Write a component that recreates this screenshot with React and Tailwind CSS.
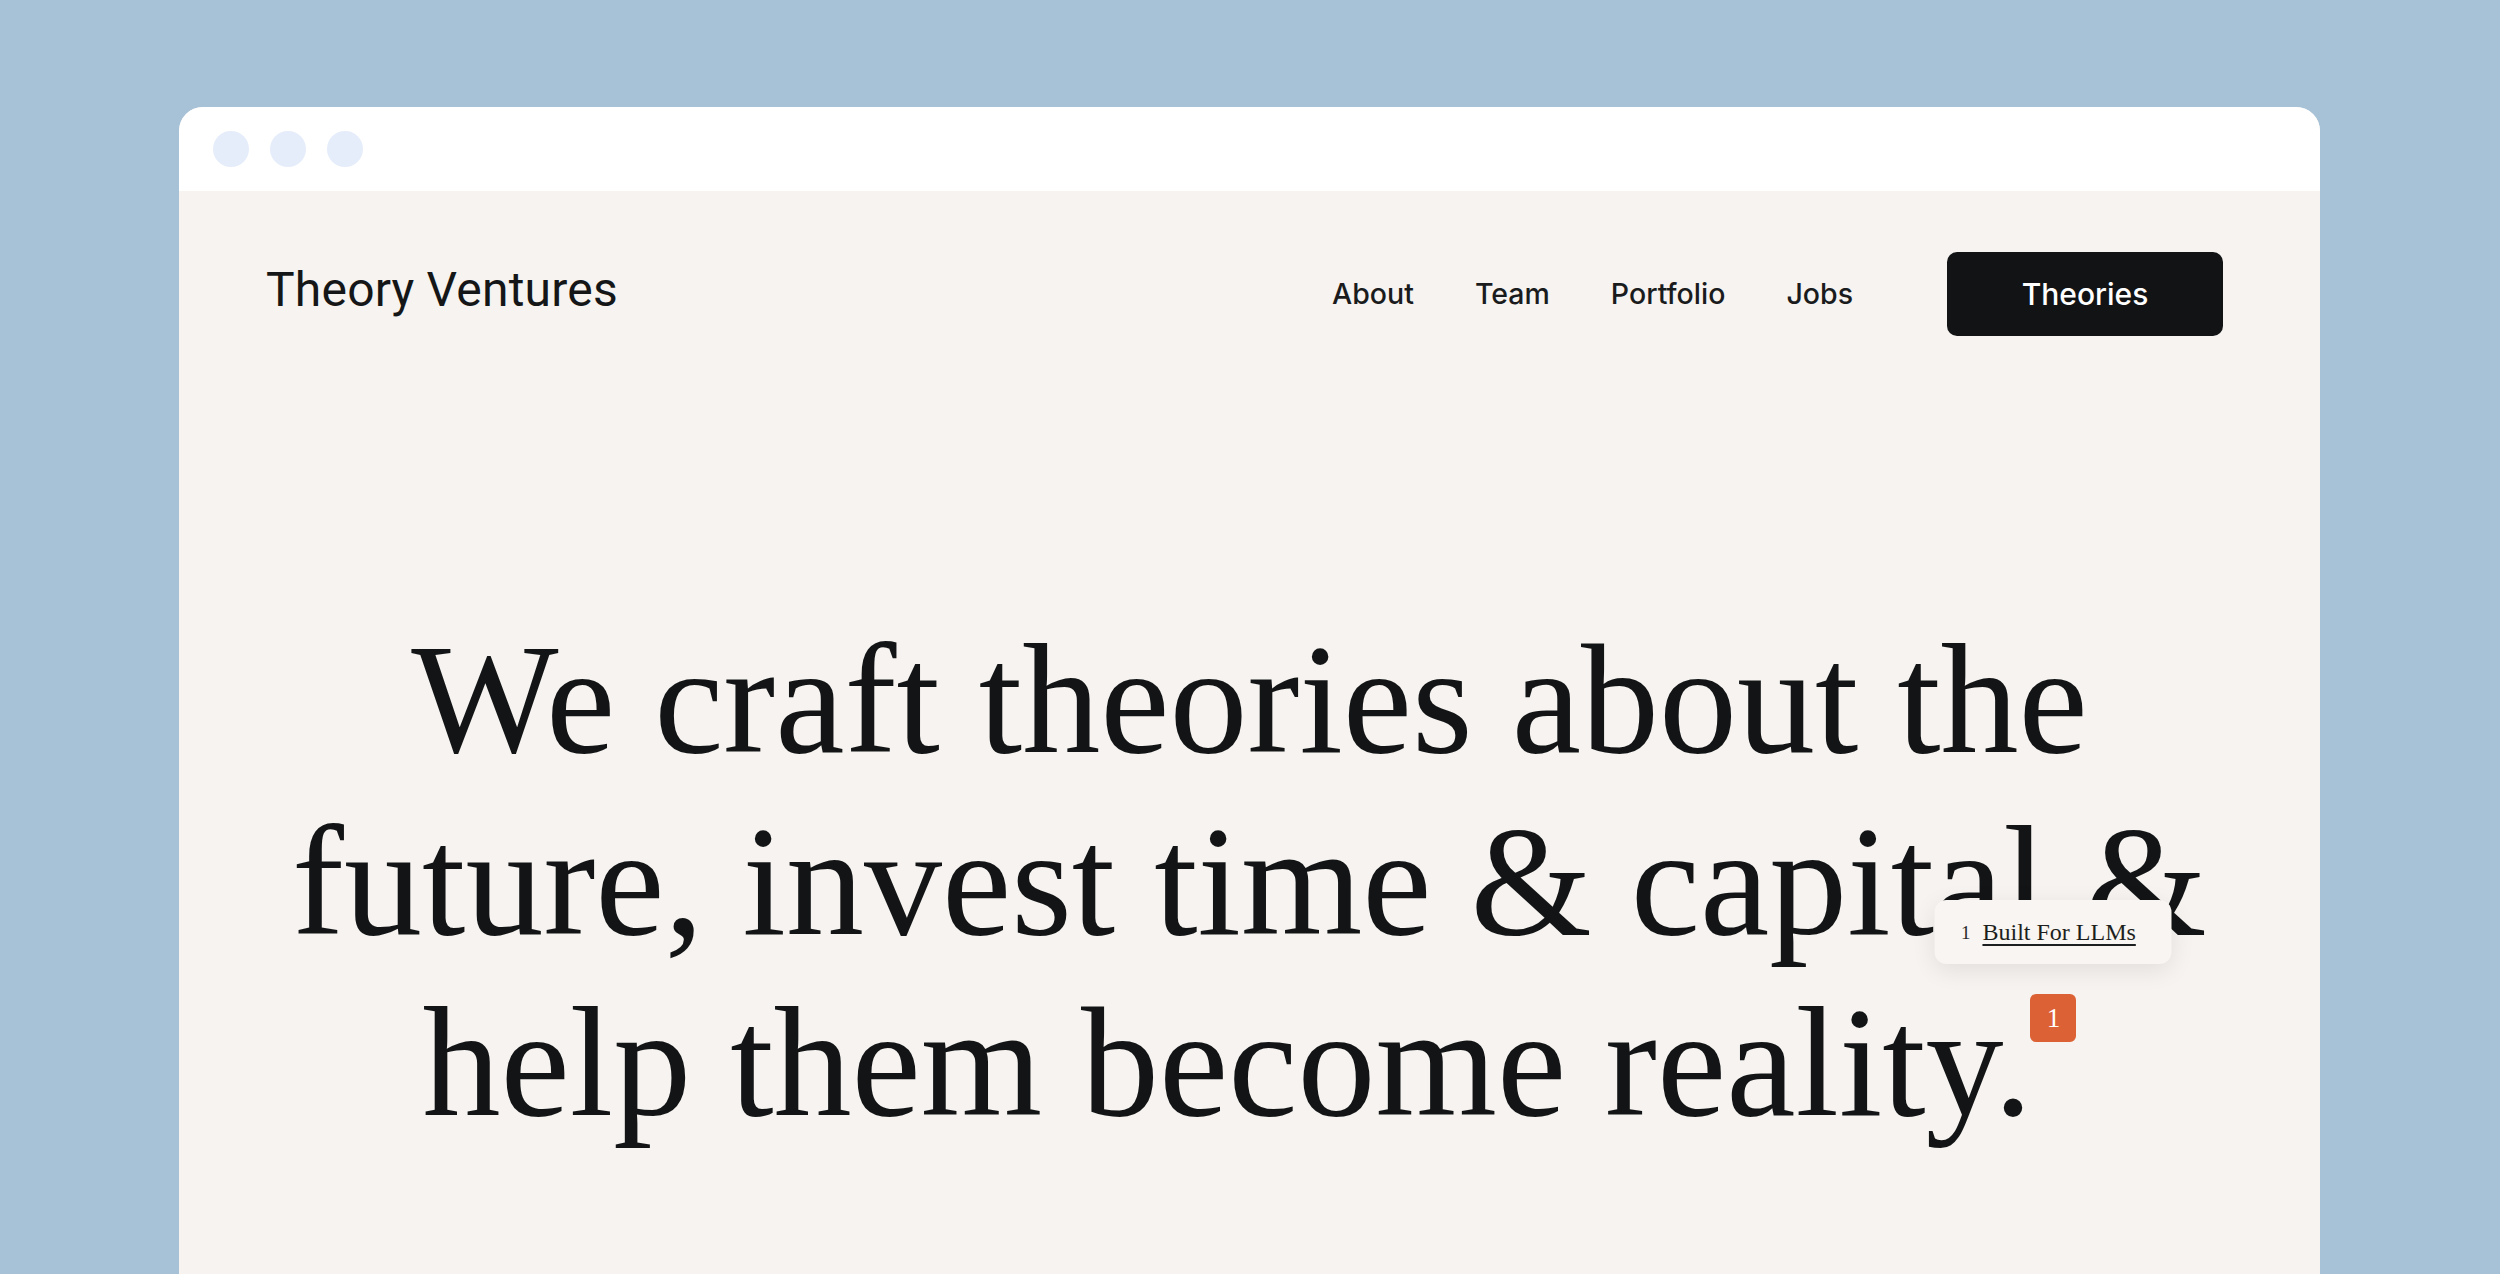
export default function App() {
  const navLinks = ['About', 'Team', 'Portfolio', 'Jobs'];

  return (
    <div className="h-screen overflow-hidden bg-[#a7c2d6] pt-[107px] pl-[179px] pr-[180px]">
      <div className="h-full rounded-t-[24px] overflow-hidden bg-[#f6f3f0] flex flex-col">
        {/* window chrome */}
        <div className="h-[84px] shrink-0 bg-white flex items-center gap-[21px] pl-[34px]">
          <span className="w-[36px] h-[36px] rounded-full bg-[#e5edfa]" />
          <span className="w-[36px] h-[36px] rounded-full bg-[#e5edfa]" />
          <span className="w-[36px] h-[36px] rounded-full bg-[#e5edfa]" />
        </div>

        {/* header */}
        <header className="flex items-center justify-between pt-[61px] pl-[87px] pr-[97px]">
          <div className="mb-[8px] text-[48px] text-[#151617] font-['Roboto',sans-serif] tracking-[0.2px]">
            Theory Ventures
          </div>
          <nav className="flex items-center">
            <div className="flex items-center gap-[61px] mr-[94px]">
              {navLinks.map(link => (
                <a
                  key={link}
                  href="#"
                  className="text-[28.5px] font-medium text-[#1a1b1d] font-['Inter',sans-serif]"
                >
                  {link}
                </a>
              ))}
            </div>
            <a
              href="#"
              className="w-[276px] h-[84px] rounded-[10px] bg-[#121315] text-white text-[30px] font-medium font-['Inter',sans-serif] flex items-center justify-center"
            >
              Theories
            </a>
          </nav>
        </header>

        {/* hero */}
        <h1 className="mt-[273px] text-center text-[156px] leading-[181.5px] text-[#121416] font-['Liberation_Serif',serif]">
          We craft theories about the
          <br />
          future, invest time &amp; capital &amp;
          <br />
          help them become reality.
          <span className="relative inline-block align-top mt-[22px] -ml-[2px]">
            <span className="w-[46px] h-[48px] rounded-[6px] bg-[#dc6236] text-white text-[27px] leading-none flex items-center justify-center">
              1
            </span>
            {/* footnote tooltip */}
            <span className="absolute bottom-full left-1/2 -translate-x-1/2 mb-[30px] w-[237px] h-[64px] rounded-[12px] bg-[#f8f5f2] shadow-[0_6px_24px_rgba(0,0,0,0.09)] flex items-center pl-[26px] gap-[12px] leading-none">
              <span className="text-[19px] text-[#2a2a2a]">1</span>
              <span className="text-[24px] text-[#1d1e20] underline underline-offset-[4px] decoration-[1.5px] whitespace-nowrap">
                Built For LLMs
              </span>
            </span>
          </span>
        </h1>
      </div>
    </div>
  );
}
